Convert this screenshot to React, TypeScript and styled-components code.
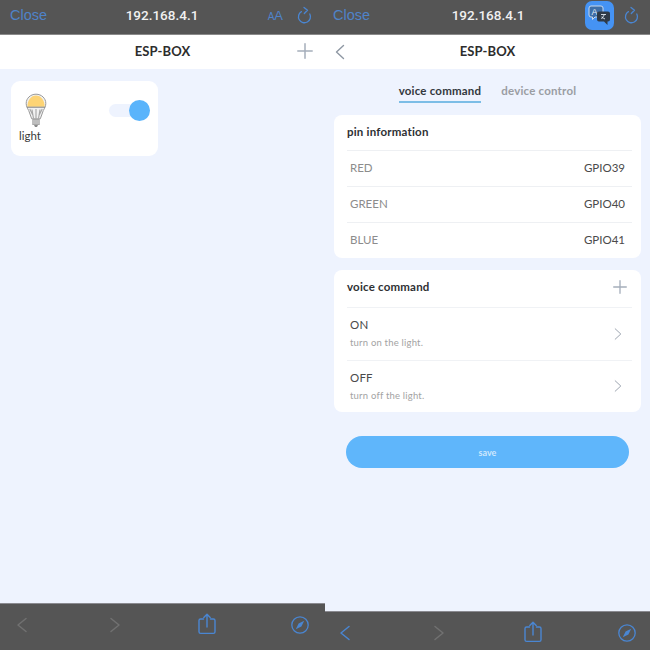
import React from "react";
import styled, { createGlobalStyle } from "styled-components";

const Global = createGlobalStyle`
  html, body { margin: 0; padding: 0; background: #eef3fe; }
  * { box-sizing: border-box; }
  #root { width: 650px; height: 650px; overflow: hidden; }
`;

const Page = styled.div`
  display: flex;
  width: 650px;
  height: 650px;
`;
const Phone = styled.div`
  width: 325px;
  height: 650px;
  display: flex;
  flex-direction: column;
  background: #eef3fe;
`;
const TopBar = styled.div<{ $right: number }>`
  height: 35px;
  flex: none;
  background: #555555;
  border-bottom: 1px solid #8a8a8a;
  display: grid;
  grid-template-columns: 1fr auto 1fr;
  align-items: center;
  padding: 0 ${(p) => p.$right}px 4px 10px;
  font-family: "Liberation Sans", Arial, sans-serif;
`;
const CloseLink = styled.span<{ $offset: number }>`
  color: #4f83c9;
  font-size: 14.5px;
  margin-left: ${(p) => p.$offset}px;
`;
const Address = styled.span`
  color: #f0f0f0;
  font-family: Roboto, "Liberation Sans", sans-serif;
  font-weight: 500;
  font-size: 13.5px;
  margin-left: 1px;
`;
const BarActions = styled.div`
  display: flex;
  align-items: center;
  justify-content: flex-end;
`;
const TextSize = styled.span`
  color: #4f83c9;
  font-size: 13px;
  margin-right: 13px;
  & small { font-size: 10px; }
`;
const TranslateBadge = styled.span`
  width: 29px;
  height: 29px;
  border-radius: 7px;
  background: #4593f4;
  display: flex;
  align-items: center;
  justify-content: center;
  margin-right: 9px;
`;
const Header = styled.div`
  height: 34px;
  flex: none;
  background: #fff;
  display: flex;
  align-items: center;
  justify-content: center;
  padding-bottom: 2px;
  position: relative;
  color: #2d2d2d;
  font-family: Lato, "Open Sans", sans-serif;
  font-weight: 700;
  font-size: 13px;
  letter-spacing: 0.1px;
`;
const HeaderIcon = styled.span<{ $side: "left" | "right"; $at: number }>`
  position: absolute;
  ${(p) => p.$side}: ${(p) => p.$at}px;
  top: 50%;
  transform: translateY(-50%);
  margin-top: ${(p) => (p.$side === "right" ? -1 : 0)}px;
  display: flex;
`;
const Main = styled.main<{ $pad: string }>`
  flex: 1;
  padding: ${(p) => p.$pad};
  font-family: Lato, "Open Sans", sans-serif;
`;
const DeviceCard = styled.div`
  width: 147px;
  height: 75px;
  background: #fff;
  border-radius: 9px;
  padding: 12px 8px 0;
  display: flex;
  justify-content: space-between;
  align-items: flex-start;
`;
const DeviceInfo = styled.div`
  display: flex;
  flex-direction: column;
  align-items: flex-start;
  color: #3a3a3a;
  font-size: 11.5px;
  line-height: 14px;
  & svg { margin-left: 6px; display: block; }
`;
const Toggle = styled.div`
  margin-top: 11px;
  width: 41px;
  height: 13px;
  border-radius: 7px;
  background: #eef3fe;
  position: relative;
`;
const Knob = styled.span`
  position: absolute;
  right: 0;
  top: -4px;
  width: 21px;
  height: 21px;
  border-radius: 50%;
  background: #5ab4fb;
`;
const Tabs = styled.div`
  display: flex;
  justify-content: center;
  gap: 20px;
  margin-bottom: 12px;
  font-size: 11.5px;
  font-weight: 700;
  letter-spacing: 0.2px;
`;
const Tab = styled.div<{ $active?: boolean }>`
  height: 34px;
  padding-top: 14px;
  line-height: 15px;
  color: ${(p) => (p.$active ? "#33383d" : "#9a9da3")};
  border-bottom: 2px solid ${(p) => (p.$active ? "#7cbde6" : "transparent")};
`;
const Card = styled.section`
  background: #fff;
  border-radius: 8px;
  padding: 0 9px 0 13px;
  margin-bottom: 12px;
`;
const CardTitle = styled.div<{ $h: number; $lift: number }>`
  height: ${(p) => p.$h}px;
  padding-bottom: ${(p) => p.$lift}px;
  display: flex;
  align-items: center;
  justify-content: space-between;
  color: #2e3033;
  font-size: 11.5px;
  font-weight: 700;
  letter-spacing: 0.2px;
  & svg { margin-right: 5px; }
`;
const PinRow = styled.div`
  height: 36px;
  border-top: 1px solid #eef0f3;
  display: flex;
  align-items: center;
  justify-content: space-between;
  padding: 0 7px 2px 3px;
  font-size: 11.5px;
  color: #8c8c8c;
  & b { font-weight: 400; color: #4a4a4a; }
`;
const CommandRow = styled.div`
  height: 52.5px;
  border-top: 1px solid #f0f2f5;
  display: flex;
  align-items: center;
  justify-content: space-between;
  padding: 0 6px 0 3px;
`;
const CommandText = styled.div`
  display: flex;
  flex-direction: column;
  gap: 4px;
  color: #4a4a4a;
  font-size: 11.5px;
  line-height: 14px;
  letter-spacing: 0.2px;
  & small { color: #a3a3a3; font-size: 9.5px; line-height: 13px; }
`;
const SaveButton = styled.button`
  display: block;
  width: 283px;
  height: 32px;
  margin: 24px 0 0 12px;
  border: none;
  border-radius: 16px;
  background: #5fb6fb;
  color: #cfe8fd;
  font-family: Lato, "Open Sans", sans-serif;
  font-size: 9px;
  font-weight: 700;
`;
const BottomBar = styled.div<{ $h: number; $pad: string }>`
  height: ${(p) => p.$h}px;
  flex: none;
  background: #555555;
  border-top: 1px solid #8a8a90;
  display: flex;
  align-items: center;
  justify-content: space-between;
  padding: ${(p) => p.$pad};
`;

const BLUE = "#4a86d2";
const GREY = "#717171";

const Chev = ({ dir, color, w = 1.6, size = 20 }: { dir: "l" | "r"; color: string; w?: number; size?: number }) => (
  <svg width={size} height={size} viewBox="0 0 20 20" fill="none" stroke={color} strokeWidth={w} strokeLinecap="round" strokeLinejoin="round">
    <path d={dir === "l" ? "M13.5 3.5 6.5 10l7 6.5" : "M6.5 3.5 13.5 10l-7 6.5"} />
  </svg>
);
const Plus = ({ size, w }: { size: number; w: number }) => (
  <svg width={size} height={size} viewBox="0 0 16 16" stroke="#a5aebb" strokeWidth={w} strokeLinecap="round">
    <path d="M8 .8v14.4M.8 8h14.4" />
  </svg>
);
const Reload = () => (
  <svg width="17" height="19" viewBox="0 0 17 19" fill="none" stroke={BLUE} strokeWidth="1.3" strokeLinecap="round" strokeLinejoin="round">
    <path d="M5.4 5.6A6 6 0 1 0 13.8 8" />
    <path d="M8 1.5 11.500 4.300 8.300 7.500" />
  </svg>
);
const Share = () => (
  <svg width="26" height="26" viewBox="0 0 26 26" fill="none" stroke={BLUE} strokeWidth="1.4" strokeLinecap="round" strokeLinejoin="round">
    <path d="M9.500 7H6.600A1.600 1.600 0 0 0 5 8.600v11.200A1.600 1.600 0 0 0 6.600 21.400h12.800A1.600 1.600 0 0 0 21 19.800V8.600A1.600 1.600 0 0 0 19.400 7H16.500" />
    <path d="M13 15V2.500M9.800 5.500 13 2.300l3.200 3.200" />
  </svg>
);
const Compass = () => (
  <svg width="26" height="26" viewBox="0 0 26 26" fill="none">
    <circle cx="13" cy="13" r="8.200" stroke={BLUE} strokeWidth="1.300" />
    <path d="M17.200 8.800 14.400 14.400 8.800 17.200 11.600 11.600Z" fill={BLUE} />
  </svg>
);
const NavChev = ({ dir, color }: { dir: "l" | "r"; color: string }) => (
  <svg width="26" height="26" viewBox="0 0 26 26" fill="none" stroke={color} strokeWidth="1.5" strokeLinecap="round" strokeLinejoin="round">
    <path d={dir === "l" ? "M17 6.500 9 13l8 6.500" : "M9 6.500 17 13l-8 6.500"} />
  </svg>
);
const Bulb = () => (
  <svg width="22" height="36" viewBox="0 0 22 36" fill="none">
    <path d="M11 1.200C5.300 1.200 1.200 5.400 1.200 10.300c0 2.800 1 4.800 2.500 7.200l3 8.300h8.600l3-8.300c1.500-2.400 2.500-4.400 2.500-7.200C20.800 5.400 16.700 1.200 11 1.200Z" fill="#f1f1f1" stroke="#9a9a9a" strokeWidth="1" />
    <path d="M2.400 13.800C2.200 7.500 6 2.600 11 2.600s8.800 4.900 8.600 11.200Z" fill="#fdd475" />
    <path d="M2 14.200h18" stroke="#808080" strokeWidth="1" />
    <path d="M7 16.500l1.500 9M11 16v9.500M15 16.500l-1.500 9M4.800 16l3 6M17.200 16l-3 6" stroke="#a5a5a5" strokeWidth="1.100" />
    <rect x="7" y="26" width="8" height="6" rx="1" fill="#a8a8a8" />
    <path d="M7 28h8M7 30h8" stroke="#e8e8e8" strokeWidth=".7" />
    <path d="M9 32h4l-1 2h-2Z" fill="#8a8a8a" />
  </svg>
);
const Translate = () => (
  <svg width="23" height="21" viewBox="0 0 23 21">
    <path d="M3 1h10a2 2 0 0 1 2 2v7a2 2 0 0 1-2 2H7l-2.500 2.500V12H3a2 2 0 0 1-2-2V3a2 2 0 0 1 2-2Z" fill="#3f6fa8" stroke="#c9d9ec" strokeWidth="1" />
    <text x="3.500" y="9.800" fontSize="9" fontFamily="Liberation Sans, sans-serif" fill="#e4edf7">A</text>
    <path d="M11 6.500h9a2 2 0 0 1 2 2v6a2 2 0 0 1-2 2h-.5V20L16 16.500h-5a2 2 0 0 1-2-2v-6a2 2 0 0 1 2-2Z" fill="#2f3a47" />
    <path d="M13 9.500h5M16.500 9.500l-3 4.500M13.500 12l3.500 2" stroke="#dfe8f2" strokeWidth=".9" fill="none" />
  </svg>
);

export default function App() {
  return (
    <Page>
      <Global />
      <Phone>
        <TopBar $right={12}>
          <CloseLink $offset={0}>Close</CloseLink>
          <Address>192.168.4.1</Address>
          <BarActions>
            <TextSize><small>A</small>A</TextSize>
            <Reload />
          </BarActions>
        </TopBar>
        <Header>
          ESP-BOX
          <HeaderIcon $side="right" $at={12}><Plus size={16} w={1.5} /></HeaderIcon>
        </Header>
        <Main $pad="12px 11px">
          <DeviceCard>
            <DeviceInfo>
              <Bulb />
              light
            </DeviceInfo>
            <Toggle><Knob /></Toggle>
          </DeviceCard>
        </Main>
        <BottomBar $h={47} $pad="0 12px 4px 9px">
          <NavChev dir="l" color={GREY} />
          <NavChev dir="r" color={GREY} />
          <Share />
          <Compass />
        </BottomBar>
      </Phone>
      <Phone>
        <TopBar $right={10}>
          <CloseLink $offset={-2}>Close</CloseLink>
          <Address>192.168.4.1</Address>
          <BarActions>
            <TranslateBadge><Translate /></TranslateBadge>
            <Reload />
          </BarActions>
        </TopBar>
        <Header>
          ESP-BOX
          <HeaderIcon $side="left" $at={5}><Chev dir="l" color="#8e97a3" size={20} w={1.4} /></HeaderIcon>
        </Header>
        <Main $pad="0 9px">
          <Tabs>
            <Tab $active>voice command</Tab>
            <Tab>device control</Tab>
          </Tabs>
          <Card>
            <CardTitle $h={35} $lift={2}>pin information</CardTitle>
            <PinRow>RED<b>GPIO39</b></PinRow>
            <PinRow>GREEN<b>GPIO40</b></PinRow>
            <PinRow>BLUE<b>GPIO41</b></PinRow>
          </Card>
          <Card>
            <CardTitle $h={37} $lift={4}>voice command<Plus size={14} w={1.5} /></CardTitle>
            <CommandRow>
              <CommandText>ON<small>turn on the light.</small></CommandText>
              <Chev dir="r" color="#9aa2ad" size={16} w={1.2} />
            </CommandRow>
            <CommandRow>
              <CommandText>OFF<small>turn off the light.</small></CommandText>
              <Chev dir="r" color="#9aa2ad" size={16} w={1.2} />
            </CommandRow>
          </Card>
          <SaveButton>save</SaveButton>
        </Main>
        <BottomBar $h={39} $pad="4px 10px 0 7px">
          <NavChev dir="l" color={BLUE} />
          <NavChev dir="r" color={GREY} />
          <Share />
          <Compass />
        </BottomBar>
      </Phone>
    </Page>
  );
}
